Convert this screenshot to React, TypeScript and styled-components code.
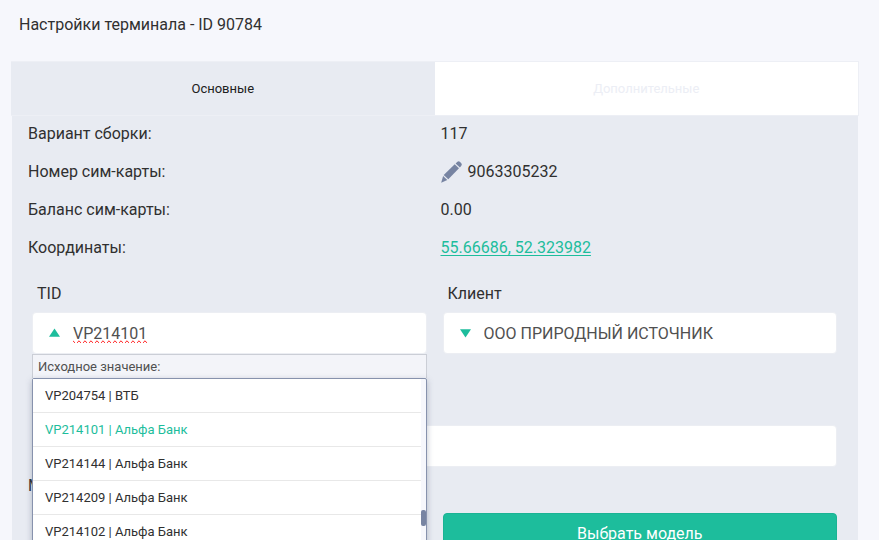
import React from "react";
import styled, { createGlobalStyle } from "styled-components";

const GlobalStyle = createGlobalStyle`
  *, *::before, *::after { box-sizing: border-box; }
  html { overflow: hidden; }
  body {
    margin: 0;
    overflow: hidden;
    background: #f6f7fc;
    color: #303030;
    font-family: Roboto, "Liberation Sans", sans-serif;
    font-size: 16px;
    line-height: 20px;
  }
  button, input { font: inherit; }
`;

const Page = styled.main`
  padding: 15px 20px 0 11px;
`;

const Title = styled.h1`
  margin: 0 0 26px 8px;
  font-size: 16px;
  font-weight: 400;
  line-height: 20px;
`;

const Tabs = styled.div`
  display: grid;
  grid-template-columns: 1fr 1fr;
  border: 1px solid #edeff5;
  border-left: 0;
`;

const Tab = styled.button<{ $active?: boolean }>`
  height: 53px;
  padding: 0;
  border: 0;
  background: ${(p) => (p.$active ? "#e8ebf2" : "#ffffff")};
  color: ${(p) => (p.$active ? "#202020" : "#eceef5")};
  font-size: 13px;
`;

const Panel = styled.section`
  margin: 0 1px;
  background: #e8ebf2;
`;

const Details = styled.dl`
  display: grid;
  grid-template-columns: 1fr 1fr;
  row-gap: 18px;
  margin: 0;
  padding: 8px 5px 0 16px;
`;

const Term = styled.dt`
  margin: 0;
`;

const Value = styled.dd`
  display: flex;
  align-items: center;
  gap: 6px;
  height: 20px;
  margin: 0;
`;

const IconButton = styled.button`
  display: flex;
  padding: 0;
  border: 0;
  background: none;
`;

const GeoLink = styled.a`
  color: #1dbd9c;
  text-decoration: underline;
  text-underline-offset: 2px;
`;

const Form = styled.form`
  display: grid;
  grid-template-columns: 1fr 1fr;
  column-gap: 16px;
  padding: 26px 21px 80px 20px;
`;

const Field = styled.div`
  position: relative;
  min-width: 0;
`;

const WideField = styled(Field)`
  grid-column: 1 / -1;
  padding-top: 71px;
`;

const Label = styled.label`
  display: block;
  margin: 0 0 8px 5px;
`;

const InputBox = styled.div`
  display: flex;
  align-items: center;
  gap: 13px;
  height: 42px;
  padding: 0 16px;
  border: 1px solid #eceef3;
  border-radius: 4px;
  background: #ffffff;
`;

const Arrow = styled.svg`
  flex: none;
  width: 11px;
  height: 10px;
  fill: #1dbd9c;
`;

const TextInput = styled.input<{ $misspelled?: boolean }>`
  flex: 1;
  min-width: 0;
  height: 30px;
  padding: 0;
  border: 0;
  outline: 0;
  background: none;
  color: #505050;
  text-decoration-line: ${(p) => (p.$misspelled ? "spelling-error" : "none")};
`;

const Dropdown = styled.div`
  position: absolute;
  top: 100%;
  left: 0;
  right: 0;
  z-index: 2;
`;

const SourceRow = styled.div`
  height: 24px;
  padding: 0 5px;
  border: 1px solid #cbced6;
  border-bottom: 0;
  background: #f3f4f9;
  color: #505050;
  font-size: 13px;
  line-height: 24px;
`;

const Options = styled.ul`
  position: relative;
  margin: 0;
  padding: 0 5px 0 0;
  border: 1px solid #8792ad;
  border-radius: 2px;
  background: #f6f7fc;
  box-shadow: 0 2px 6px rgba(70, 80, 110, 0.35);
  list-style: none;
`;

const Option = styled.li<{ $selected?: boolean }>`
  height: 34px;
  padding: 0 12px;
  border-bottom: 1px solid #e8e8e8;
  background: #ffffff;
  color: ${(p) => (p.$selected ? "#1dbd9c" : "#303030")};
  font-size: 13px;
  line-height: 34px;
`;

const Thumb = styled.span`
  position: absolute;
  top: 131px;
  right: 0;
  width: 5px;
  height: 16px;
  border-radius: 2px;
  background: #7784a2;
`;

const ModelLabel = styled.span`
  margin: 9px 0 0 -4px;
`;

const ModelCell = styled.div`
  padding-top: 46px;
`;

const PrimaryButton = styled.button`
  width: 100%;
  height: 42px;
  padding: 0;
  border: 1px solid #1ab394;
  border-radius: 4px;
  background: #1dbd9c;
  color: #ffffff;
`;

const terminals = [
  "VP204754 | ВТБ",
  "VP214101 | Альфа Банк",
  "VP214144 | Альфа Банк",
  "VP214209 | Альфа Банк",
  "VP214102 | Альфа Банк",
];

function Pencil() {
  return (
    <svg width="21" height="22" viewBox="0 0 21 22" fill="#7784a2" aria-hidden="true">
      <path d="M14.600 2.400 16.400.8Q17.600-.2 18.800.7L20.300 2.200Q21.300 3.500 20.300 4.700L18.900 6.400Z" />
      <path d="M13.700 3.200 18 7.200 7.300 18.200 2.700 14Z" />
      <path d="M2.100 15 6.300 18.900.2 21.800Z" />
    </svg>
  );
}

export default function App() {
  return (
    <>
      <GlobalStyle />
      <Page>
        <Title>Настройки терминала - ID 90784</Title>
        <Tabs role="tablist">
          <Tab type="button" role="tab" aria-selected="true" $active>Основные</Tab>
          <Tab type="button" role="tab" aria-selected="false">Дополнительные</Tab>
        </Tabs>
        <Panel>
          <Details>
            <Term>Вариант сборки:</Term>
            <Value>117</Value>
            <Term>Номер сим-карты:</Term>
            <Value>
              <IconButton type="button" aria-label="Изменить номер"><Pencil /></IconButton>
              9063305232
            </Value>
            <Term>Баланс сим-карты:</Term>
            <Value>0.00</Value>
            <Term>Координаты:</Term>
            <Value><GeoLink href="#map">55.66686, 52.323982</GeoLink></Value>
          </Details>
          <Form>
            <Field>
              <Label htmlFor="tid">TID</Label>
              <InputBox>
                <Arrow viewBox="0 0 12 10" aria-hidden="true"><path d="M6 0 12 9H0Z" /></Arrow>
                <TextInput id="tid" defaultValue="VP214101" $misspelled />
              </InputBox>
              <Dropdown>
                <SourceRow>Исходное значение:</SourceRow>
                <Options role="listbox" aria-label="TID">
                  {terminals.map((name, i) => (
                    <Option key={name} role="option" aria-selected={i === 1} $selected={i === 1}>
                      {name}
                    </Option>
                  ))}
                  <Thumb aria-hidden="true" />
                </Options>
              </Dropdown>
            </Field>
            <Field>
              <Label htmlFor="client">Клиент</Label>
              <InputBox>
                <Arrow viewBox="0 0 12 10" aria-hidden="true"><path d="M0 1H12L6 10Z" /></Arrow>
                <TextInput id="client" defaultValue="ООО ПРИРОДНЫЙ ИСТОЧНИК" />
              </InputBox>
            </Field>
            <WideField>
              <InputBox><TextInput aria-label="Адрес" /></InputBox>
            </WideField>
            <ModelLabel>Модель</ModelLabel>
            <ModelCell>
              <PrimaryButton type="button">Выбрать модель</PrimaryButton>
            </ModelCell>
          </Form>
        </Panel>
      </Page>
    </>
  );
}
